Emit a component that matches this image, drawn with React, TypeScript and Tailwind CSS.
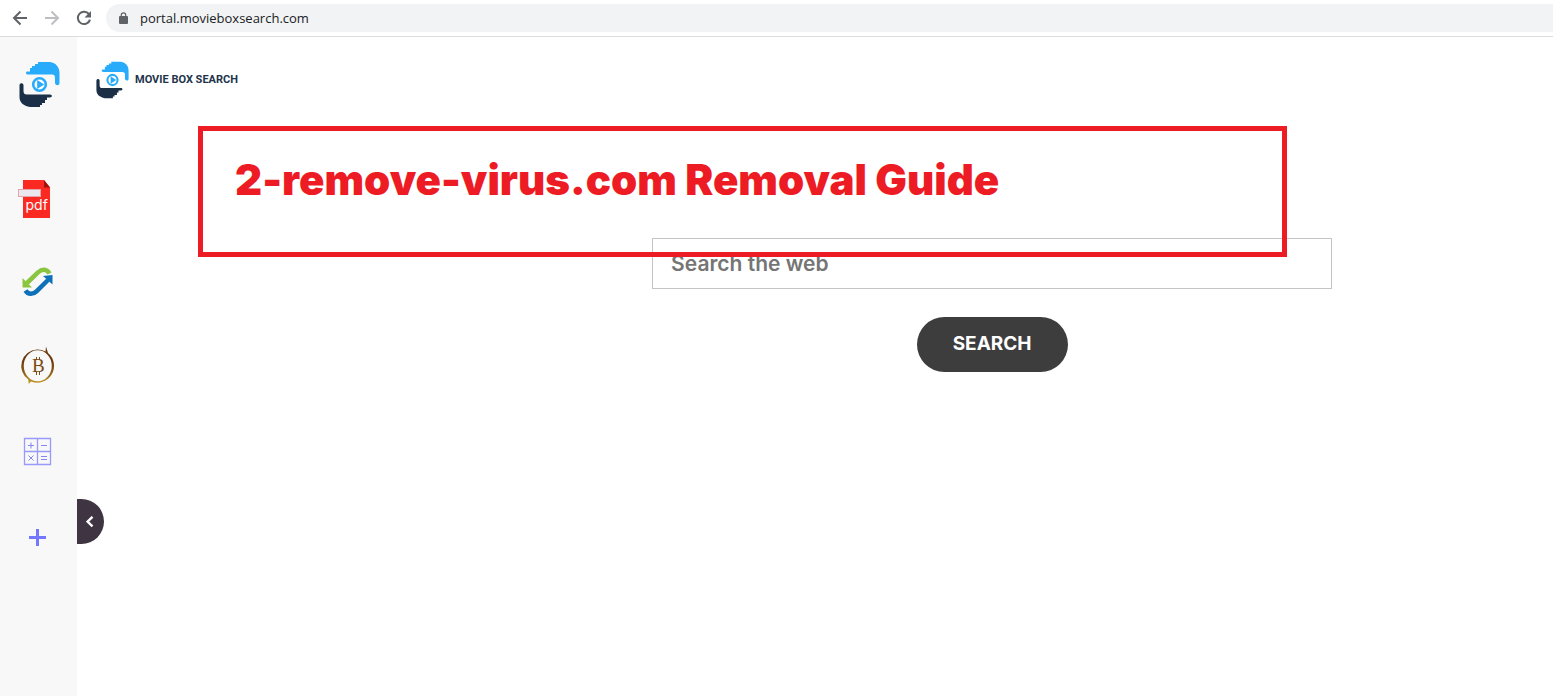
import React, { useState } from 'react';

const App = () => {
  const [collapsed, setCollapsed] = useState(false);

  return (
    <div className="flex min-h-screen flex-col bg-white">
      <BrowserBar />
      <div className="flex flex-1">
        {!collapsed && <Sidebar />}
        <main className="relative min-w-0 flex-1">
          <Brand />
          <SearchForm />
          <Annotation />
          <button
            type="button"
            aria-label="Toggle sidebar"
            onClick={() => setCollapsed(!collapsed)}
            className="absolute left-0 top-[462px] flex h-[45px] w-[27px] items-center justify-center rounded-r-full bg-[#3e3442]"
          >
            <svg width="10" height="12" viewBox="0 0 10 12" fill="none" stroke="#fff" strokeWidth="2.4">
              <path d="M6.500 .8 1.500 5.600l5 4.800" />
            </svg>
          </button>
        </main>
      </div>
    </div>
  );
};

const BrowserBar = () => (
  <header className="flex h-[37px] items-center border-b border-[#dadce0] pl-3">
    <nav className="flex gap-4">
      <button type="button" aria-label="Back">
        <svg width="16" height="16" viewBox="0 0 16 16" fill="none" stroke="#5f6368" strokeWidth="2">
          <path d="M15 8H2.5M8.5 1.5 2 8l6.5 6.5" />
        </svg>
      </button>
      <button type="button" aria-label="Forward">
        <svg width="16" height="16" viewBox="0 0 16 16" fill="none" stroke="#bcbec1" strokeWidth="2">
          <path d="M1 8h12.500M7.500 1.500 14 8l-6.500 6.500" />
        </svg>
      </button>
      <button type="button" aria-label="Reload">
        <svg width="16" height="16" viewBox="0 0 16 16">
          <path d="M13.300 4.600A6.200 6.200 0 1 0 14 9.600" fill="none" stroke="#5f6368" strokeWidth="2" />
          <path d="M15 1v6.500H8.500z" fill="#5f6368" />
        </svg>
      </button>
    </nav>
    <div className="ml-3.5 flex h-7 flex-1 items-center gap-3 rounded-l-full bg-[#f1f3f4] pl-3">
      <svg width="10" height="12" viewBox="0 0 10 12">
        <rect x="1" y="4" width="9" height="8" rx="1" fill="#5f6368" />
        <path d="M3.300 4.500V3a2.200 2.200 0 0 1 4.400 0v1.500" fill="none" stroke="#5f6368" strokeWidth="1.200" />
      </svg>
      <span className="font-['Open_Sans',sans-serif] text-[13px] leading-5 text-[#202124]">
        portal.movieboxsearch.com
      </span>
    </div>
  </header>
);

const LogoMark = ({ className }: { className: string }) => (
  <svg className={className} viewBox="0 0 41 47" preserveAspectRatio="none">
    <path
      d="M8 10.500h3V7h2V5h3V3h3V1h12c6 1 9.500 5 9.500 11v10c0 3-4 3-4.500 0v-5c0-2.500-1-3.500-3-3.500H9c-2.500 0-2.500-2.500-1-3z"
      fill="#29abfb"
    />
    <path
      d="M.5 24c.5-2.500 3.500-2.500 4 0v6c0 2.500 1 3.500 3.500 3.500h23c2.500 0 2.500 3 0 3h-3V39h-2v3h-3v2h-2v2H11C4.500 45 .5 41.500 .5 36z"
      fill="#1b2f47"
    />
    <circle cx="20.500" cy="23.500" r="6.300" fill="#fff" stroke="#29abfb" strokeWidth="2.600" />
    <path d="m18.200 19 7 4.500-7 4.500z" fill="#29abfb" />
  </svg>
);

const PdfIcon = () => (
  <svg width="45" height="44" viewBox="0 0 45 44">
    <path d="M7 3h21l6 7.500V41H7z" fill="#fa2a23" />
    <path d="M28 3v7.500h6z" fill="#a30f0b" />
    <rect x="2.500" y="12.500" width="22" height="7" fill="#ebe7ee" stroke="#e3a5a9" />
    <text x="9.500" y="32.500" fill="#fff" fontSize="14" fontWeight="400" fontFamily="Inter, sans-serif">
      pdf
    </text>
  </svg>
);

const ConvertIcon = () => (
  <svg width="45" height="44" viewBox="0 0 45 44">
    <path d="M33.500 12.500c-2.500-5-8-4.500-11-1.500L11 22" fill="none" stroke="#8bc53f" strokeWidth="4.500" />
    <path d="M6.500 17v9.500h9.500z" fill="#8bc53f" />
    <path d="M9.500 29.500c2.500 4.300 8 3.800 11 .8L32 19" fill="none" stroke="#0c71b9" strokeWidth="4.500" />
    <path d="M27 15 36.500 14v9.500z" fill="#0c71b9" />
  </svg>
);

const BitcoinIcon = () => (
  <svg width="45" height="44" viewBox="0 0 45 44">
    <defs>
      <linearGradient id="gold" x1="0" y1="0" x2="0" y2="1">
        <stop offset="0" stopColor="#6b3a0e" />
        <stop offset="0.400" stopColor="#6b3a0e" />
        <stop offset="0.750" stopColor="#94681a" />
        <stop offset="1" stopColor="#c9a028" />
      </linearGradient>
    </defs>
    <path
      fillRule="evenodd"
      fill="url(#gold)"
      d="M21 4.500a16.500 16.500 0 0 1 8.500 2L30 1.500l2 6.500a16.800 16.800 0 0 1-17 28.500L12.700 39l-.4-4.500A16.500 16.500 0 0 1 21 4.500zM21.500 5.300a14 15.500 0 1 0 .5 31A14 15.500 0 0 0 21.500 5.300z"
    />
    <text x="16" y="27" fill="#7a4a14" fontSize="19" fontFamily="Liberation Serif, serif">
      B
    </text>
    <path d="M20.500 12v3m3-3v3m-3 11.500V30m3-3.500V30" stroke="#7a4a14" />
  </svg>
);

const CalculatorIcon = () => (
  <svg width="45" height="44" viewBox="0 0 45 44" fill="none" stroke="#9799fb">
    <path d="M8.500 9.500h26v26h-26zM21.500 9.500v26M8.500 22.500h26" strokeWidth="1.300" />
    <path d="M12 16.500h6m-3-3v6M25 16.500h6M12.500 26.500l5 5m0-5-5 5M25 27.500h6M25 30.500h6" stroke="#8587f5" />
  </svg>
);

const PlusIcon = () => (
  <svg width="45" height="44" viewBox="0 0 45 44">
    <path d="M13 24.500h17M21.500 16v17" stroke="#7378fd" strokeWidth="3" />
  </svg>
);

const tools = [
  { label: 'PDF', Icon: PdfIcon },
  { label: 'Convert', Icon: ConvertIcon },
  { label: 'Bitcoin', Icon: BitcoinIcon },
  { label: 'Calculator', Icon: CalculatorIcon },
  { label: 'Add', Icon: PlusIcon }
];

const Sidebar = () => (
  <aside className="flex w-[77px] shrink-0 flex-col items-center bg-[#f8f8f8] pt-6">
    <a href="#home" aria-label="Home" className="pl-0.5">
      <LogoMark className="h-[47px] w-[41px]" />
    </a>
    <nav className="mt-[49px] flex flex-col">
      {tools.map(({ label, Icon }) => (
        <a key={label} href="#tool" aria-label={label} className="flex h-[84px] items-center">
          <Icon />
        </a>
      ))}
    </nav>
  </aside>
);

const Brand = () => (
  <a href="#home" className="flex items-center gap-1.5 pl-[19px] pt-6">
    <LogoMark className="h-[38px] w-[33px]" />
    <span className="whitespace-nowrap font-['Roboto',sans-serif] text-[11px] font-bold leading-5 text-[#22344b]">
      MOVIE BOX SEARCH
    </span>
  </a>
);

const SearchForm = () => {
  const [query, setQuery] = useState('');

  return (
    <form
      onSubmit={(e) => e.preventDefault()}
      className="mt-[139px] flex flex-col items-center gap-7 pl-[24%] font-['Inter',sans-serif]"
    >
      <input
        type="text"
        aria-label="Search the web"
        value={query}
        onChange={(e) => setQuery(e.target.value)}
        placeholder="Search the web"
        className="h-[51px] w-full max-w-[680px] border border-[#c4c4c4] px-[18px] text-[21px] font-semibold text-[#333] outline-none placeholder:text-[#757575]"
      />
      <button type="submit" className="h-[55px] rounded-full bg-[#3d3d3d] px-9 text-[19px] font-bold text-white">
        SEARCH
      </button>
    </form>
  );
};

const Annotation = () => (
  <div className="pointer-events-none absolute left-[121px] right-[266px] top-[89px] h-[131px] border-[5px] border-[#ed1c24] px-8 pt-[23px]">
    <h1 className="whitespace-nowrap font-['Inter',sans-serif] text-[42px] font-black leading-[52px] text-[#ed1c24]">
      2-remove-virus.com Removal Guide
    </h1>
  </div>
);

export default App;
